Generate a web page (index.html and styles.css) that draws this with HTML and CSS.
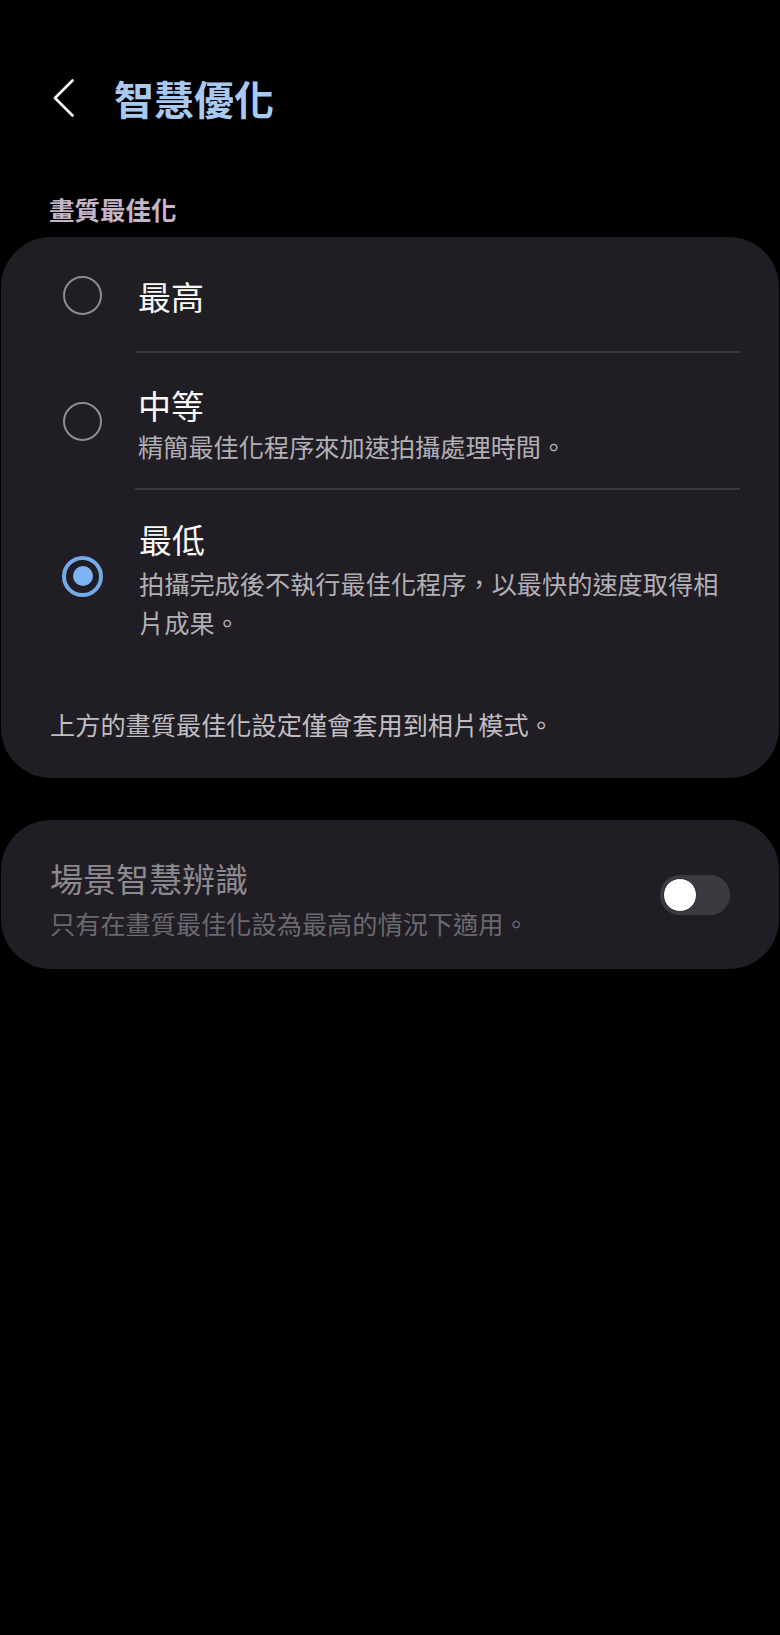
FILE: index.html
```html
<!DOCTYPE html>
<html lang="zh-Hant">
<head>
<meta charset="utf-8">
<title>智慧優化</title>
<link rel="stylesheet" href="styles.css">
</head>
<body>
<div class="screen">
  <header class="appbar">
    <svg class="back" width="24" height="40" viewBox="0 0 24 40" aria-hidden="true">
      <path d="M20.5 1.5 L3 19 L20.5 36.5" fill="none" stroke="#ffffff" stroke-width="2.6" stroke-linecap="round" stroke-linejoin="round"/>
    </svg>
    <h1 class="title">智慧優化</h1>
  </header>

  <div class="section-label">畫質最佳化</div>

  <section class="card">
    <div class="option option-first">
      <span class="radio"></span>
      <div class="option-body divided">
        <div class="option-title">最高</div>
      </div>
    </div>
    <div class="option option-mid">
      <span class="radio"></span>
      <div class="option-body divided">
        <div class="option-title">中等</div>
        <div class="option-sub">精簡最佳化程序來加速拍攝處理時間。</div>
      </div>
    </div>
    <div class="option option-last">
      <span class="radio radio-on"></span>
      <div class="option-body">
        <div class="option-title">最低</div>
        <div class="option-sub">拍攝完成後不執行最佳化程序，以最快的速度取得相片成果。</div>
      </div>
    </div>
    <p class="note">上方的畫質最佳化設定僅會套用到相片模式。</p>
  </section>

  <section class="card card-switch">
    <div class="switch-text">
      <div class="switch-title">場景智慧辨識</div>
      <div class="switch-sub">只有在畫質最佳化設為最高的情況下適用。</div>
    </div>
    <span class="toggle"><span class="thumb"></span></span>
  </section>
</div>
</body>
</html>
```
FILE: styles.css
```css
html, body {
  margin: 0;
  padding: 0;
  background: #000000;
}

body {
  font-family: "Noto Sans CJK TC", "Noto Sans", sans-serif;
  color: #fafafa;
}

.screen {
  width: 780px;
  min-height: 1635px;
  background: #000000;
}

.appbar {
  display: flex;
  align-items: center;
  height: 100px;
  margin-top: 48px;
  padding-left: 52px;
}

.back {
  display: block;
  margin-top: 2px;
}

.title {
  margin: 0 0 0 38px;
  font-size: 40px;
  font-weight: 700;
  line-height: 56px;
  color: #a8c9f0;
}

.section-label {
  margin-top: 43px;
  padding-left: 49px;
  font-size: 25.5px;
  font-weight: 700;
  line-height: 36px;
  color: #c5b5c8;
}

.card {
  margin: 10px 1px 0 1px;
  background: #211d24;
  border-radius: 50px;
}

.option {
  display: flex;
  align-items: center;
  padding-left: 62px;
}

.option-body {
  flex: 1;
  margin-left: 33px;
  margin-right: 39px;
}

.divided {
  border-bottom: 2px solid #3b3940;
}

.option-first .option-body {
  padding: 39px 0 35px;
}

.option-mid .option-body {
  padding: 32px 0 22px;
}

.option-last .option-body {
  padding: 29px 0 20px;
}

.option-title {
  padding-left: 3px;
  font-size: 33px;
  line-height: 40px;
  color: #fafafa;
}

.option-sub {
  margin-top: 2px;
  padding: 0 4px 0 3px;
  font-size: 25.2px;
  line-height: 39px;
  color: #b2b0b6;
}

.option-last .option-sub {
  margin-top: 5px;
}

.radio {
  box-sizing: border-box;
  flex: none;
  width: 39px;
  height: 39px;
  border: 2.5px solid #8f8c93;
  border-radius: 50%;
}

.radio-on {
  display: flex;
  align-items: center;
  justify-content: center;
  width: 41px;
  height: 41px;
  margin-left: -1px;
  border: 4px solid #72aaeb;
}

.radio-on::after {
  content: "";
  width: 20px;
  height: 20px;
  border-radius: 50%;
  background: #7cb4f3;
}

.note {
  margin: 42px 0 0;
  padding: 0 0 34px 49px;
  font-size: 25.2px;
  line-height: 40px;
  color: #c0bec3;
}

.card-switch {
  display: flex;
  align-items: center;
  margin-top: 42px;
  padding: 36px 49px 26px 49px;
}

.switch-text {
  flex: 1;
}

.switch-title {
  font-size: 33px;
  line-height: 44px;
  color: #8c8990;
}

.switch-sub {
  margin-top: 3px;
  font-size: 25.2px;
  line-height: 40px;
  color: #6b6970;
}

.toggle {
  box-sizing: border-box;
  display: flex;
  align-items: center;
  width: 70px;
  height: 40px;
  margin-bottom: 10px;
  padding-left: 3px;
  border-radius: 20px;
  background: #3c3a41;
}

.thumb {
  box-sizing: border-box;
  width: 34px;
  height: 34px;
  border-radius: 50%;
  background: #ffffff;
  border: 1px solid #2a282d;
}
```
